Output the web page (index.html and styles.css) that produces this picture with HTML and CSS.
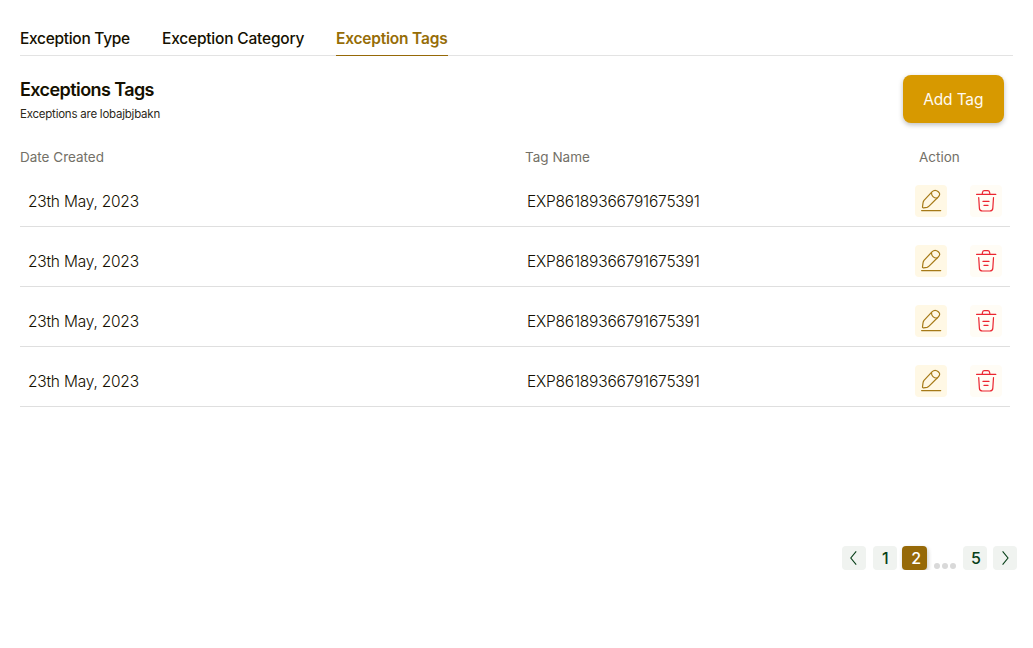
FILE: index.html
```html
<!DOCTYPE html>
<html lang="en">
<head>
<meta charset="utf-8">
<title>Exception Tags</title>
<link rel="stylesheet" href="styles.css">
</head>
<body>
<svg class="sprite" aria-hidden="true">
  <symbol id="pencil" viewBox="0 0 32 32">
    <path d="M17.2 6.7 9 15.3Q8.1 16.5 8 18L7.5 21.8Q7.4 23 8.6 22.8L12 22.3Q13.3 22 14.3 20.9L23.2 12C25.3 9.8 25 8.2 23.3 6.7 21.2 4.9 19 4.9 17.2 6.7Z"/>
    <path d="M16.5 7.6C16.3 10.8 18.8 13.2 22 13M6.6 25.6H25.7"/>
  </symbol>
  <symbol id="trash" viewBox="0 0 32 32">
    <path d="M6.6 9.4H25.8M12.2 9.2 12.5 7.3Q12.8 5.6 14.4 5.6H17.7Q19.3 5.6 19.6 7.3L19.9 9.2M8.7 12.5 9.4 23.4Q9.6 26 12.4 26H19.8Q22.6 26 22.8 23.4L23.5 12.5M13 16.4H19M14 20.4H18"/>
  </symbol>
</svg>
<main class="page">
  <nav class="tabs">
    <a class="tab tab-type">Exception Type</a>
    <a class="tab tab-category">Exception Category</a>
    <a class="tab tab-active">Exception Tags</a>
  </nav>
  <header class="header">
    <div class="heading">
      <h1 class="title">Exceptions Tags</h1>
      <p class="subtitle">Exceptions are lobajbjbakn</p>
    </div>
    <button class="add">Add Tag</button>
  </header>
  <section class="table">
    <div class="head"><span class="head-date">Date Created</span><span class="head-name">Tag Name</span><span class="head-action">Action</span></div>
    <div class="row"><span class="date">23th May, 2023</span><span class="name">EXP86189366791675391</span><button class="icon edit"><svg><use href="#pencil"/></svg></button><button class="icon delete"><svg><use href="#trash"/></svg></button></div>
    <div class="row"><span class="date">23th May, 2023</span><span class="name">EXP86189366791675391</span><button class="icon edit"><svg><use href="#pencil"/></svg></button><button class="icon delete"><svg><use href="#trash"/></svg></button></div>
    <div class="row"><span class="date">23th May, 2023</span><span class="name">EXP86189366791675391</span><button class="icon edit"><svg><use href="#pencil"/></svg></button><button class="icon delete"><svg><use href="#trash"/></svg></button></div>
    <div class="row"><span class="date">23th May, 2023</span><span class="name">EXP86189366791675391</span><button class="icon edit"><svg><use href="#pencil"/></svg></button><button class="icon delete"><svg><use href="#trash"/></svg></button></div>
  </section>
  <nav class="pagination">
    <a class="page-btn prev"><svg viewBox="0 0 24 24"><path d="M14.2 5.4 8.8 12l5.4 6.6"/></svg></a>
    <a class="page-btn">1</a>
    <a class="page-btn current">2</a>
    <span class="dots"><i></i><i></i><i></i></span>
    <a class="page-btn last">5</a>
    <a class="page-btn next"><svg viewBox="0 0 24 24"><path d="M9.6 5.4 15 12l-5.4 6.6"/></svg></a>
  </nav>
</main>
</body>
</html>
```

FILE: styles.css
```css
* { box-sizing: border-box; }
body {
  margin: 0;
  background: #fff;
  color: #151000;
  font-family: Inter, "Liberation Sans", sans-serif;
  font-size: 16px;
}
button { border: 0; padding: 0; font: inherit; }
.sprite { display: none; }
.page { padding: 22px 16px 0 20px; }

.tabs {
  display: flex;
  gap: 32px;
  width: 993px;
  height: 34px;
  border-bottom: 1px solid #e3e3e3;
}
.tab {
  height: 34px;
  line-height: 33px;
  font-size: 15.5px;
  font-weight: 500;
  white-space: nowrap;
}
.tab-type { width: 110px; letter-spacing: -0.3px; }
.tab-category { width: 142px; letter-spacing: -0.2px; }
.tab-active {
  width: 112px;
  color: #966d07;
  font-weight: 600;
  letter-spacing: -0.2px;
  border-bottom: 1px solid #966908;
}

.header {
  display: flex;
  justify-content: space-between;
  width: 983.5px;
  height: 86px;
  padding-top: 19px;
}
.title {
  margin: 3px 0 0;
  font-size: 18px;
  line-height: 24px;
  font-weight: 600;
  letter-spacing: -0.58px;
}
.subtitle {
  margin: 4px 0 0;
  font-size: 11.5px;
  line-height: 16px;
  letter-spacing: -0.23px;
  color: #2c2819;
}
.add {
  width: 100.5px;
  height: 48px;
  border-radius: 8px;
  background: #d79900;
  color: #fffaf0;
  font-size: 15.5px;
  letter-spacing: -0.15px;
  box-shadow: 0 2px 5px rgba(0, 0, 0, 0.25);
}

.table { width: 990px; }
.head {
  display: grid;
  grid-template-columns: 505px 394px 1fr;
  height: 25px;
  line-height: 31px;
  font-size: 13.5px;
  color: #737067;
}
.row {
  display: grid;
  grid-template-columns: 499px 388px 32px 32px;
  height: 60px;
  padding: 18px 0 0 8px;
  border-bottom: 1px solid #dfdfdf;
  line-height: 33px;
  font-size: 15.5px;
}
.date { letter-spacing: -0.22px; }
.name { letter-spacing: -0.21px; }
.date, .name { font-weight: 350; }
.row .delete { margin-left: 23px; }
.icon {
  width: 32px;
  height: 32px;
  border-radius: 4px;
}
.icon svg {
  display: block;
  width: 32px;
  height: 32px;
  fill: none;
  stroke: currentColor;
  stroke-width: 1.2;
  stroke-linecap: round;
  stroke-linejoin: round;
}
.edit { background: #fff8e5; color: #a67a18; }
.delete { background: #fffcf5; color: #eb2530; }

.pagination {
  display: flex;
  height: 24px;
  margin: 139px 0 0 822.4px;
}
.page-btn {
  flex: none;
  width: 24px;
  height: 24px;
  border-radius: 4px;
  background: #f0f3f0;
  color: #073f18;
  text-align: center;
  line-height: 25px;
  font-weight: 500;
}
.page-btn svg {
  display: block;
  width: 24px;
  height: 24px;
  fill: none;
  stroke: currentColor;
  stroke-width: 1.1;
}
.prev { margin-right: 7px; }
.current {
  width: 24.5px;
  margin-left: 5px;
  padding-left: 3px;
  background: #966908;
  color: #fff;
  box-shadow: 1px 2px 4px rgba(0, 0, 0, 0.22);
}
.dots {
  display: flex;
  gap: 2px;
  width: 36px;
  padding: 17px 0 0 7px;
}
.dots i { width: 6px; height: 6px; border-radius: 50%; background: #d9d9d9; }
.last { padding-left: 3px; }
.next { margin-left: 6.5px; }
```
